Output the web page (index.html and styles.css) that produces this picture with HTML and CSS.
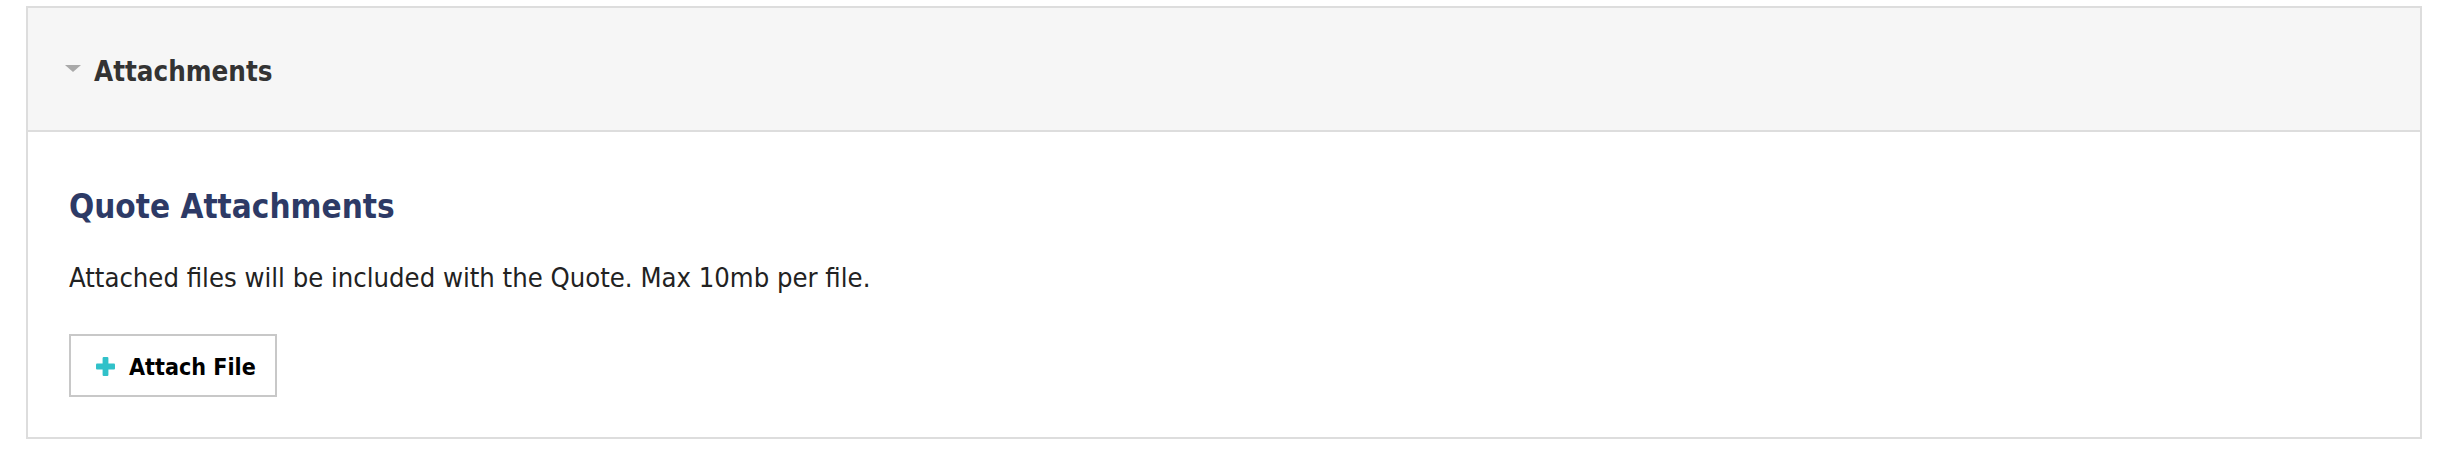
FILE: index.html
```html
<!DOCTYPE html>
<html lang="en">
<head>
<meta charset="utf-8">
<title>Attachments</title>
<link rel="stylesheet" href="styles.css">
</head>
<body>
<section class="panel">
  <header class="panel-header">
    <span class="caret" aria-hidden="true"></span>
    <span class="panel-title">Attachments</span>
  </header>
  <div class="panel-body">
    <h2 class="section-title">Quote Attachments</h2>
    <p class="section-text">Attached files will be included with the Quote. Max 10mb per file.</p>
    <button class="attach-btn" type="button">
      <svg class="plus" width="19" height="19" viewBox="0 0 19 19" aria-hidden="true">
        <rect x="6.6" y="0" width="5.8" height="19" rx="1" fill="#31c1c9"/>
        <rect x="0" y="6.6" width="19" height="5.8" rx="1" fill="#31c1c9"/>
      </svg>
      <span class="btn-label">Attach File</span>
    </button>
  </div>
</section>
</body>
</html>
```

FILE: styles.css
```css
html, body {
  margin: 0;
  padding: 0;
  background: #ffffff;
}

body {
  font-family: "DejaVu Sans Condensed", "DejaVu Sans", sans-serif;
  color: #222222;
}

.panel {
  margin: 6px 26px 0;
  border: 2px solid #dddddd;
  box-sizing: border-box;
  background: #ffffff;
}

.panel-header {
  display: flex;
  align-items: flex-start;
  gap: 13px;
  padding: 48px 37px 44px;
  background: #f6f6f6;
  border-bottom: 2px solid #dddddd;
}

.caret {
  width: 0;
  height: 0;
  margin-top: 9px;
  border-left: 8px solid transparent;
  border-right: 8px solid transparent;
  border-top: 7px solid #a9a9a9;
}

.panel-title {
  font-size: 27.5px;
  line-height: 30px;
  font-weight: bold;
  color: #333333;
}

.panel-body {
  padding: 55px 41px 40px;
}

.section-title {
  margin: 0 0 36px;
  font-size: 33px;
  line-height: 40px;
  font-weight: bold;
  color: #2d3a66;
}

.section-text {
  margin: 0 0 41px;
  font-size: 27.2px;
  line-height: 30px;
  color: #222222;
}

.attach-btn {
  display: flex;
  align-items: flex-start;
  gap: 14px;
  box-sizing: border-box;
  height: 63px;
  padding: 18px 19px 14px 25px;
  border: 2px solid #c8c8c8;
  border-radius: 0;
  background: #ffffff;
  font-family: inherit;
  cursor: pointer;
}

.plus {
  display: block;
  flex: none;
  margin-top: 3px;
}

.btn-label {
  font-size: 23.1px;
  line-height: 27px;
  font-weight: bold;
  color: #000000;
}
```
